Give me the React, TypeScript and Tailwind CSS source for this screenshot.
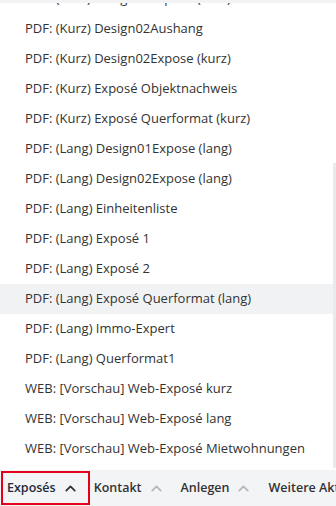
import { ChevronUp } from 'lucide-react'

const items = [
  'PDF: (Kurz) Design01Expose (kurz)',
  'PDF: (Kurz) Design02Aushang',
  'PDF: (Kurz) Design02Expose (kurz)',
  'PDF: (Kurz) Exposé Objektnachweis',
  'PDF: (Kurz) Exposé Querformat (kurz)',
  'PDF: (Lang) Design01Expose (lang)',
  'PDF: (Lang) Design02Expose (lang)',
  'PDF: (Lang) Einheitenliste',
  'PDF: (Lang) Exposé 1',
  'PDF: (Lang) Exposé 2',
  'PDF: (Lang) Exposé Querformat (lang)',
  'PDF: (Lang) Immo-Expert',
  'PDF: (Lang) Querformat1',
  'WEB: [Vorschau] Web-Exposé kurz',
  'WEB: [Vorschau] Web-Exposé lang',
  'WEB: [Vorschau] Web-Exposé Mietwohnungen'
]

const actions = [
  { label: 'Exposés', active: true },
  { label: 'Kontakt', active: false },
  { label: 'Anlegen', active: false },
  { label: 'Weitere Aktionen', active: false }
]

export default function App() {
  return (
    <div className="flex h-[506px] w-[336px] flex-col overflow-hidden bg-white font-['Open_Sans',sans-serif]">
      {/* Dropdown list (scrolled to bottom) */}
      <div className="relative flex-1 overflow-hidden">
        <div className="-mt-[16px] w-[333px]">
          {items.map((item, i) => (
            <div
              key={item}
              className={`flex h-[30px] items-center whitespace-nowrap pl-[25px] text-[13px] text-[#333] ${i === 10 ? 'bg-[#f0f2f4]' : ''}`}
            >
              {item}
            </div>
          ))}
        </div>
        <div className="absolute left-0 right-0 top-0 h-[3px] bg-[#f3f3f5]" />
        {/* scrollbar thumb */}
        <div className="absolute right-0 top-[163px] h-[305px] w-[3px] bg-[#e9eaec]" />
      </div>

      {/* Action bar */}
      <div className="flex h-[36px] shrink-0 items-stretch whitespace-nowrap bg-[#f3f4f6] text-[12.5px] font-semibold text-[#333]">
        {actions.map((a) => (
          <div
            key={a.label}
            className={`flex items-center gap-[6px] ${a.active ? 'mb-[1px] ml-[1px] mt-[1px] border-2 border-[#e4001b] pl-[4px] pr-[9px] text-[#1f2d3d]' : 'pl-[4px] pr-[12px]'}`}
          >
            <span>{a.label}</span>
            {a.label !== 'Weitere Aktionen' && (
              <ChevronUp size={17} strokeWidth={2.5} className={a.active ? 'text-[#333]' : 'text-[#b5b8bd]'} />
            )}
          </div>
        ))}
      </div>
    </div>
  )
}
